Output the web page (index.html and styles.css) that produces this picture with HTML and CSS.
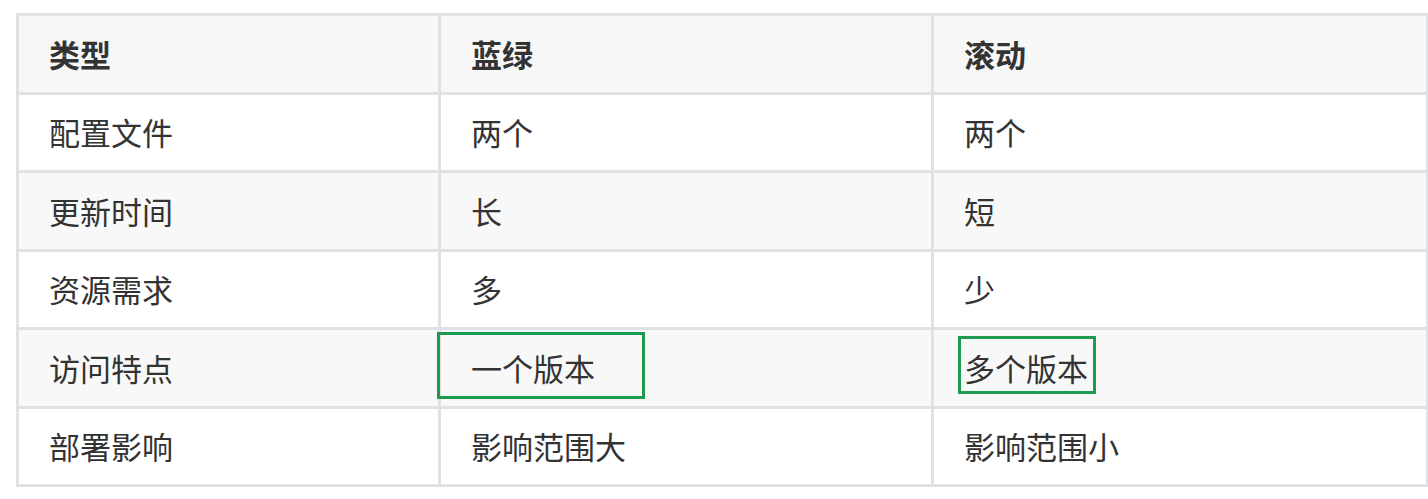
FILE: index.html
```html
<!DOCTYPE html>
<html lang="zh-CN">
<head>
<meta charset="utf-8">
<title>蓝绿与滚动对比</title>
<link rel="stylesheet" href="styles.css">
</head>
<body>
<div class="wrap">
  <table class="cmp">
    <colgroup>
      <col class="c1">
      <col class="c2">
      <col class="c3">
    </colgroup>
    <thead>
      <tr><th>类型</th><th>蓝绿</th><th>滚动</th></tr>
    </thead>
    <tbody>
      <tr><td>配置文件</td><td>两个</td><td>两个</td></tr>
      <tr><td>更新时间</td><td>长</td><td>短</td></tr>
      <tr><td>资源需求</td><td>多</td><td>少</td></tr>
      <tr><td>访问特点</td><td>一个版本</td><td>多个版本</td></tr>
      <tr><td>部署影响</td><td>影响范围大</td><td>影响范围小</td></tr>
    </tbody>
  </table>
  <div class="mark mark-a"></div>
  <div class="mark mark-b"></div>
</div>
</body>
</html>
```
FILE: styles.css
```css
html, body {
  margin: 0;
  padding: 0;
  background: #ffffff;
  overflow: hidden;
}
body {
  font-family: "Noto Sans CJK SC", "Noto Sans", sans-serif;
  color: #333333;
}
.wrap {
  position: relative;
  margin: 13px 0 0 16px;
  width: 1413px;
}
.cmp {
  border-collapse: collapse;
  table-layout: fixed;
  width: 1413px;
  font-size: 31px;
}
.c1 { width: 422px; }
.c2 { width: 493px; }
.c3 { width: 495px; }
.cmp th,
.cmp td {
  border: 3px solid #dfe2e5;
  padding: 14.75px 30px;
  line-height: 46px;
  text-align: left;
  white-space: nowrap;
}
.cmp th {
  font-weight: 700;
  background: #f7f7f7;
}
.cmp tbody tr:nth-child(even) td {
  background: #f8f8f8;
}
.mark {
  position: absolute;
  border: 3px solid #1e9b50;
  box-sizing: border-box;
}
.mark-a {
  left: 421px;
  top: 319px;
  width: 208px;
  height: 67px;
}
.mark-b {
  left: 942px;
  top: 323px;
  width: 138px;
  height: 58px;
}
```
